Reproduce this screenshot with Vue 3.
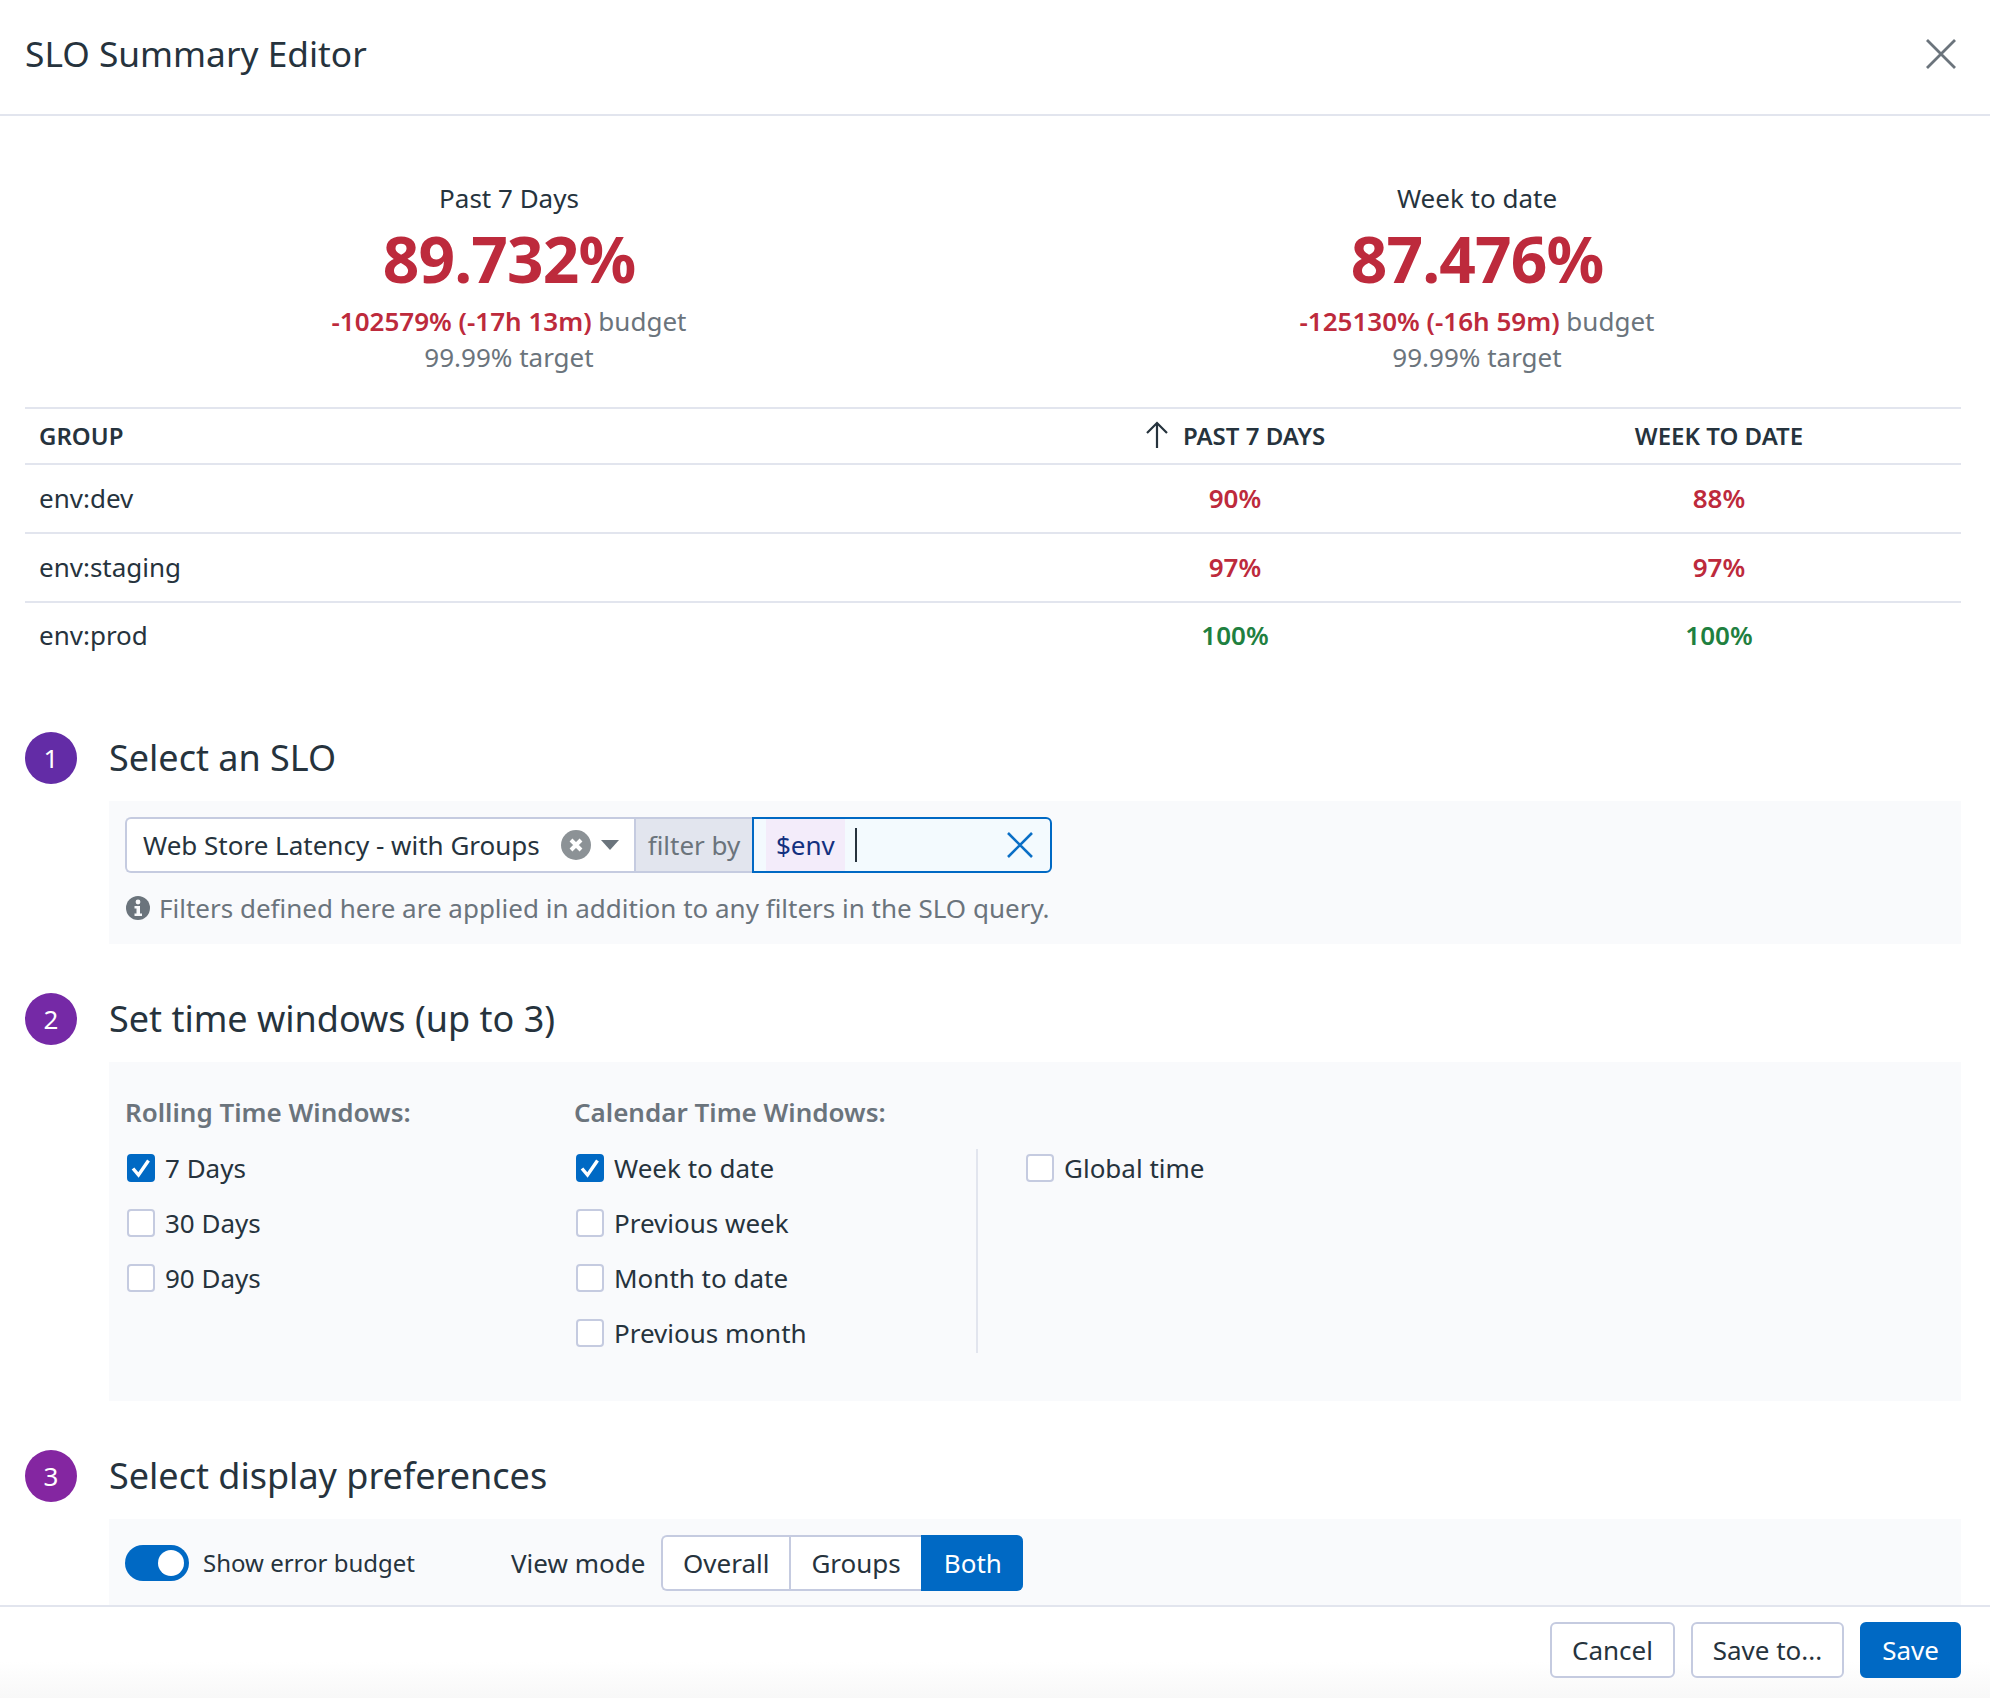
<script setup>
const stats = [
  { title: 'Past 7 Days', value: '89.732%', budget: '-102579% (-17h 13m)' },
  { title: 'Week to date', value: '87.476%', budget: '-125130% (-16h 59m)' }
]
const rows = [
  { name: 'env:dev', a: '90%', b: '88%', ok: false },
  { name: 'env:staging', a: '97%', b: '97%', ok: false },
  { name: 'env:prod', a: '100%', b: '100%', ok: true }
]
const rolling = [
  { label: '7 Days', on: true },
  { label: '30 Days', on: false },
  { label: '90 Days', on: false }
]
const calendar = [
  { label: 'Week to date', on: true },
  { label: 'Previous week', on: false },
  { label: 'Month to date', on: false },
  { label: 'Previous month', on: false }
]
</script>

<template>
  <div class="modal">
    <header class="head">
      <h1>SLO Summary Editor</h1>
      <svg class="close" width="32" height="32" viewBox="0 0 32 32"><path d="M2 2 L30 30 M30 2 L2 30" stroke="#6b747c" stroke-width="2.8" fill="none"/></svg>
    </header>

    <main class="body">
      <section class="stats">
        <div v-for="s in stats" :key="s.title" class="stat">
          <div class="stat-title">{{ s.title }}</div>
          <div class="stat-value">{{ s.value }}</div>
          <div class="muted"><b class="red">{{ s.budget }}</b> budget</div>
          <div class="muted">99.99% target</div>
        </div>
      </section>

      <section class="table">
        <div class="tr th">
          <div class="c-group">GROUP</div>
          <div class="c-num sorted">
            <svg width="24" height="28" viewBox="0 0 24 28"><path d="M12 27 V2 M2 12 L12 2 L22 12" stroke="#26333d" stroke-width="2.2" fill="none"/></svg>
            PAST 7 DAYS
          </div>
          <div class="c-num">WEEK TO DATE</div>
        </div>
        <div v-for="r in rows" :key="r.name" class="tr">
          <div class="c-group">{{ r.name }}</div>
          <div class="c-num val" :class="r.ok ? 'green' : 'red'">{{ r.a }}</div>
          <div class="c-num val" :class="r.ok ? 'green' : 'red'">{{ r.b }}</div>
        </div>
      </section>

      <div class="step first">
        <span class="num n1">1</span>
        <h2>Select an SLO</h2>
      </div>
      <section class="panel p1">
        <div class="query">
          <div class="select">
            <span class="select-text">Web Store Latency - with Groups</span>
            <svg class="clear" width="30" height="30" viewBox="0 0 30 30"><circle cx="15" cy="15" r="15" fill="#8c9296"/><path d="M10 10 L20 20 M20 10 L10 20" stroke="#fff" stroke-width="4" fill="none"/></svg>
            <svg class="caret" width="18" height="10" viewBox="0 0 18 10"><path d="M0 0 H18 L9 10 Z" fill="#6b747c"/></svg>
          </div>
          <div class="filter-by">filter by</div>
          <div class="filter-input">
            <span class="token">$env</span>
            <span class="cursor"></span>
            <svg class="input-x" width="26" height="26" viewBox="0 0 26 26"><path d="M1 1 L25 25 M25 1 L1 25" stroke="#0a6fc6" stroke-width="2.6" fill="none"/></svg>
          </div>
        </div>
        <div class="hint">
          <svg width="24" height="24" viewBox="0 0 24 24"><circle cx="12" cy="12" r="12" fill="#6b747c"/><circle cx="12" cy="6" r="2.4" fill="#f8f9fb"/><path d="M8.5 10 H14 V17.5 H16 V20 H8.5 V17.5 H10.5 V12.5 H8.5 Z" fill="#f8f9fb"/></svg>
          <span>Filters defined here are applied in addition to any filters in the SLO query.</span>
        </div>
      </section>

      <div class="step">
        <span class="num n2">2</span>
        <h2>Set time windows (up to 3)</h2>
      </div>
      <section class="panel p2">
        <div class="col col-rolling">
          <div class="col-title">Rolling Time Windows:</div>
          <label v-for="o in rolling" :key="o.label" class="check">
            <span class="box" :class="{ on: o.on }">
              <svg v-if="o.on" width="22" height="22" viewBox="0 0 22 22"><path d="M3 11.5 L8.5 18 L18.5 3.5" stroke="#fff" stroke-width="3.4" fill="none"/></svg>
            </span>{{ o.label }}
          </label>
        </div>
        <div class="col col-calendar">
          <div class="col-title">Calendar Time Windows:</div>
          <div class="cal-list">
            <label v-for="o in calendar" :key="o.label" class="check">
              <span class="box" :class="{ on: o.on }">
                <svg v-if="o.on" width="22" height="22" viewBox="0 0 22 22"><path d="M3 11.5 L8.5 18 L18.5 3.5" stroke="#fff" stroke-width="3.4" fill="none"/></svg>
              </span>{{ o.label }}
            </label>
          </div>
        </div>
        <div class="col-global">
          <label class="check global"><span class="box"></span>Global time</label>
        </div>
      </section>

      <div class="step">
        <span class="num n3">3</span>
        <h2>Select display preferences</h2>
      </div>
      <section class="panel p3">
        <span class="toggle"><span class="knob"></span></span>
        <span class="toggle-label">Show error budget</span>
        <span class="view-label">View mode</span>
        <div class="segments">
          <span class="seg">Overall</span>
          <span class="seg">Groups</span>
          <span class="seg active">Both</span>
        </div>
      </section>
    </main>

    <footer class="foot">
      <button class="btn b-cancel">Cancel</button>
      <button class="btn b-saveto">Save to...</button>
      <button class="btn primary">Save</button>
    </footer>
  </div>
</template>

<style>
html, body { margin: 0; background: #fff; }
</style>

<style scoped>
.modal {
  width: 1990px; height: 1698px; display: flex; flex-direction: column; overflow: hidden;
  font-family: "Noto Sans", sans-serif; font-size: 26px; color: #26333d; background: #fff;
}
.head {
  flex: none; height: 116px; box-sizing: border-box; border-bottom: 2px solid #e2e5ee;
  display: flex; align-items: center; justify-content: space-between; padding: 0 33px 6px 25px;
}
h1 { margin: 0 0 3px; font-size: 35.3px; font-weight: 400; line-height: 48px; }
.body { flex: 1; min-height: 0; overflow: hidden; padding: 0 29px 0 25px; }
.stats { display: grid; grid-template-columns: 1fr 1fr; padding-top: 64px; text-align: center; height: 227px; }
.stat-title { line-height: 36px; }
.stat-value { font-size: 64px; font-weight: 700; line-height: 76px; color: #bd2a3c; margin-top: 5px; margin-bottom: 6px; letter-spacing: -0.9px; }
.muted { color: #6b747c; line-height: 36px; }
.muted b { font-weight: 600; }
.red { color: #bd2a3c; }
.green { color: #1f8040; }
.table { font-size: 26px; }
.tr { display: grid; grid-template-columns: 968px 484px 1fr; height: 69px; align-items: center; border-top: 2px solid #e2e5ee; box-sizing: border-box; padding-bottom: 2px; }
.tr.th { height: 56px; font-size: 24px; font-weight: 600; }
.tr:last-child { height: 68px; }
.c-group { padding-left: 14px; }
.c-num { text-align: center; }
.sorted { display: flex; align-items: center; justify-content: center; gap: 14px; }
.val { font-weight: 600; font-size: 26px; }
.step { display: flex; align-items: center; gap: 32px; height: 52px; margin-top: 49px; margin-bottom: 17px; }
.step.first { margin-top: 63px; }
h2 { margin: 0; font-size: 36px; font-weight: 400; line-height: 52px; }
.num { flex: none; width: 52px; height: 52px; border-radius: 50%; color: #fff; display: flex; align-items: center; justify-content: center; font-size: 26px; }
.n1 { background: #632ca6; }
.n2 { background: #7529a6; }
.n3 { background: #8426a1; }
.panel { margin-left: 84px; background: #f9fafc; box-sizing: border-box; }
.p1 { height: 143px; padding: 16px 16px 0; }
.query { display: flex; height: 56px; width: 927px; }
.select { width: 509px; box-sizing: border-box; background: #fff; border: 2px solid #c5cbe0; border-right: 0; border-radius: 6px 0 0 6px; display: flex; align-items: center; padding: 0 15px 0 16px; }
.select-text { flex: 1; white-space: nowrap; }
.clear { margin-right: 10px; }
.filter-by { width: 118px; background: #e2e5ee; border-top: 2px solid #c5cbe0; border-bottom: 2px solid #c5cbe0; border-left: 2px solid #c5cbe0; box-sizing: border-box; color: #6b747c; display: flex; align-items: center; justify-content: center; }
.filter-input { flex: 1; position: relative; box-sizing: border-box; background: #f3fafe; border: 2px solid #0069c4; border-radius: 0 6px 6px 0; display: flex; align-items: center; padding-left: 12px; }
.token { background: #f3ecfa; color: #12307f; height: 100%; display: flex; align-items: center; padding: 0 10px; box-sizing: border-box; }
.cursor { width: 2px; height: 34px; background: #26333d; margin-left: 10px; }
.input-x { position: absolute; right: 17px; top: 13px; }
.hint { display: flex; align-items: center; gap: 9px; margin-top: 17px; line-height: 36px; color: #6b747c; padding-left: 1px; }
.hint svg { flex: none; }
.p2 { height: 339px; padding: 32px 16px 0; display: flex; align-items: flex-start; }
.col-rolling { width: 449px; }
.col-calendar { width: 402px; }
.col-title { color: #6b747c; font-weight: 600; line-height: 36px; margin-bottom: 10px; }
.check { display: flex; align-items: center; height: 55px; gap: 10px; white-space: nowrap; }
.box { width: 28px; height: 28px; box-sizing: border-box; background: #fff; border: 2px solid #c5cbe0; border-radius: 4px; display: flex; align-items: center; justify-content: center; margin-left: 2px; }
.box.on { background: #0069c4; border-color: #0069c4; }
.col-global { margin-top: 55px; border-left: 2px solid #e2e5ee; height: 204px; padding-left: 46px; box-sizing: border-box; }
.global { margin-top: -9px; }
.p3 { height: 120px; padding: 16px 16px 48px; display: flex; align-items: center; }
.toggle { width: 64px; height: 36px; border-radius: 18px; background: #0069c4; position: relative; flex: none; }
.knob { position: absolute; right: 5px; top: 5px; width: 26px; height: 26px; border-radius: 50%; background: #fff; }
.toggle-label { margin-left: 14px; font-size: 24px; width: 308px; flex: none; padding-bottom: 2px; }
.view-label { width: 150px; flex: none; padding-bottom: 1px; }
.segments { display: flex; height: 56px; }
.seg { display: flex; align-items: center; box-sizing: border-box; background: #fff; border: 2px solid #c5cbe0; border-right: 0; padding: 0 20px; }
.seg:first-child { border-radius: 6px 0 0 6px; }
.seg.active { background: #0069c4; border-color: #0069c4; color: #fff; border-radius: 0 6px 6px 0; padding: 0 21px; }
.foot {
  flex: none; height: 93px; box-sizing: border-box; border-top: 2px solid #e2e5ee; display: flex; justify-content: flex-end; align-items: flex-start; gap: 16px; padding: 15px 29px 0 0;
  background: linear-gradient(#fff 60%, #f8f8f8 100%);
}
.btn { height: 56px; box-sizing: border-box; background: #fff; border: 2px solid #c5cbe0; border-radius: 6px; font: inherit; color: #26333d; padding: 0; }
.b-cancel { width: 125px; }
.b-saveto { width: 153px; }
.primary { width: 101px; background: #0069c4; border-color: #0069c4; color: #fff; }
</style>
